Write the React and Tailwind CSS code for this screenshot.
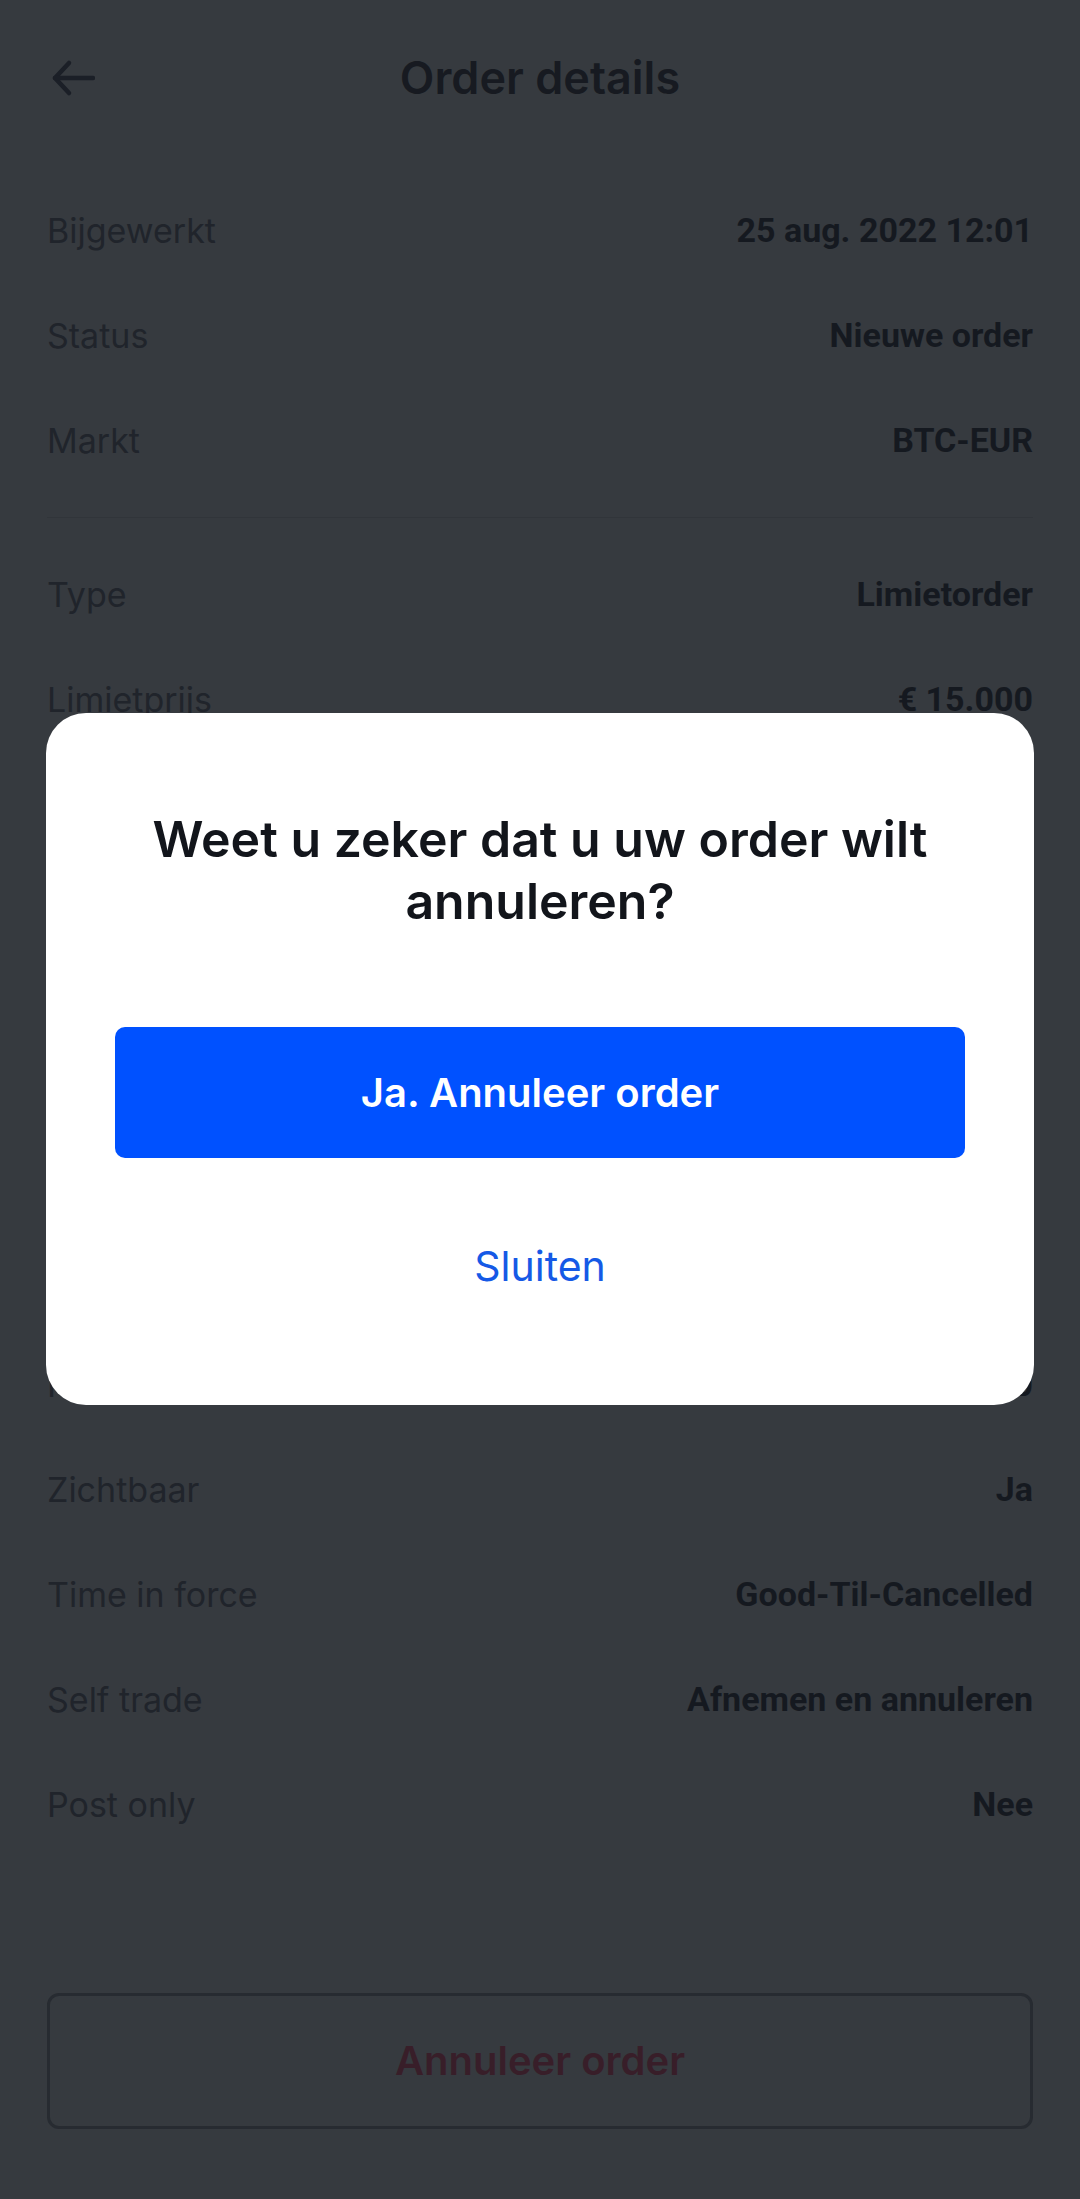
import React from 'react';

const topRows = [
  { label: 'Bijgewerkt', value: '25 aug. 2022 12:01' },
  { label: 'Status', value: 'Nieuwe order' },
  { label: 'Markt', value: 'BTC-EUR' },
];

const orderRows = [
  { label: 'Type', value: 'Limietorder' },
  { label: 'Limietprijs', value: '€ 15.000' },
  { label: 'Hoeveelheid', value: '0,01 BTC' },
  { label: 'Totaal', value: '€ 150' },
];

const fillRows = [
  { label: 'Uitgevoerd', value: '0 BTC' },
  { label: 'Gemiddelde prijs', value: '-' },
  { label: 'Kosten', value: '€ 0,00' },
  { label: 'Restant', value: '€ 150' },
  { label: 'Zichtbaar', value: 'Ja' },
  { label: 'Time in force', value: 'Good-Til-Cancelled' },
  { label: 'Self trade', value: 'Afnemen en annuleren' },
  { label: 'Post only', value: 'Nee' },
];

const Row = ({ label, value }) => (
  <div className="flex h-[105px] items-center justify-between text-[34px]">
    <span className="text-[#20242b]">{label}</span>
    <span className="font-['Roboto',sans-serif] font-bold text-[#151920]">{value}</span>
  </div>
);

const BackArrow = () => (
  <svg width="48" height="40" viewBox="0 0 48 40" fill="none" stroke="#1b1f27" strokeWidth="4.5" strokeLinecap="round" strokeLinejoin="round">
    <path d="M22 5 8 20l14 15" />
    <path d="M8 20h38" />
  </svg>
);

export default function App() {
  return (
    <div className="relative h-[2199px] w-full overflow-hidden bg-[#363a3f] font-['Inter',sans-serif]">
      {/* header */}
      <div className="grid h-[156px] grid-cols-[1fr_auto_1fr] items-center px-[47px]">
        <div className="flex">
          <BackArrow />
        </div>
        <h1 className="text-[45px] font-semibold text-[#171a21]">Order details</h1>
        <div />
      </div>

      <div className="px-[47px] pt-[22px]">
        {topRows.map((r) => (
          <Row key={r.label} {...r} />
        ))}
        <div className="my-6 h-px bg-[#31353a]" />
        {orderRows.map((r) => (
          <Row key={r.label} {...r} />
        ))}
        <div className="my-[27px] h-px bg-[#31353a]" />
        {fillRows.map((r) => (
          <Row key={r.label} {...r} />
        ))}

        <button className="mt-[136px] flex h-[136px] w-full items-center justify-center rounded-[12px] border-[3px] border-[#272b31] text-[40px] font-semibold text-[#381e29]">
          Annuleer order
        </button>
      </div>

      {/* confirm dialog */}
      <div className="absolute inset-0 flex items-center justify-center px-[46px] pb-[81px]">
        <div className="w-full rounded-[40px] bg-white px-[60px] pt-[95px] pb-[73px] text-center">
          <h2 className="text-[50px] leading-[62px] font-semibold text-[#12151b]">
            Weet u zeker dat u uw order wilt annuleren?
          </h2>
          <button className="mx-[9px] mt-[95px] flex h-[131px] w-[calc(100%-18px)] items-center justify-center rounded-[10px] bg-[#0051ff] text-[40px] font-semibold text-white">
            Ja. Annuleer order
          </button>
          <button className="mt-[43px] flex h-[131px] w-full items-center justify-center text-[41px] text-[#1559e6]">
            Sluiten
          </button>
        </div>
      </div>
    </div>
  );
}
